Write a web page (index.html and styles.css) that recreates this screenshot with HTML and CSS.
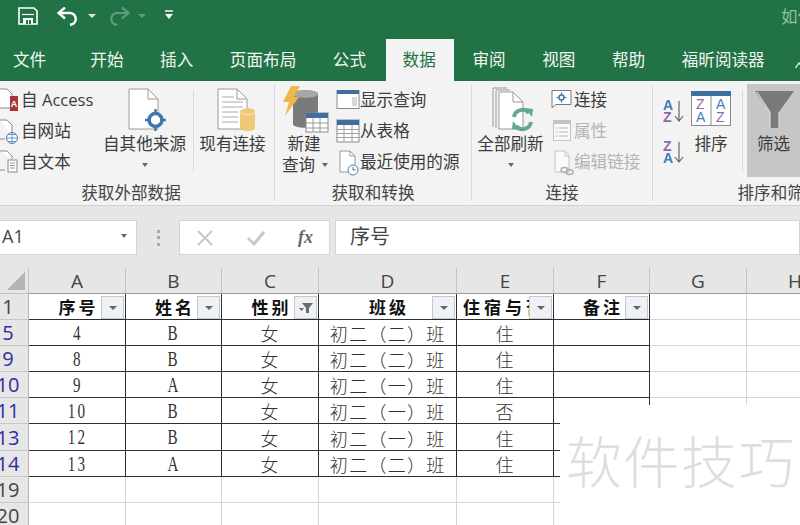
FILE: index.html
```html
<!DOCTYPE html>
<html lang="zh-CN">
<head>
<meta charset="utf-8">
<title>数据筛选</title>
<link rel="stylesheet" href="styles.css">
</head>
<body>
<div class="app">
  <header class="titlebar">
    <svg class="qa-save" width="20" height="18" viewBox="0 0 20 18"><path d="M1 1h15l3 3v13H1z" fill="none" stroke="#fff" stroke-width="1.6"/><rect x="5" y="11" width="10" height="6" fill="#fff"/><rect x="8" y="13" width="2" height="4" fill="#217346"/><rect x="11" y="13" width="2" height="4" fill="#217346"/><path d="M4 7.5h12" stroke="#fff" stroke-width="1.2"/></svg>
    <svg class="qa-undo" width="22" height="20" viewBox="0 0 22 20"><path d="M2 6h11a6 6 0 0 1 3 11l-3 1" fill="none" stroke="#fff" stroke-width="2.4"/><path d="M8 0.5 1.5 6 8 11.5" fill="none" stroke="#fff" stroke-width="2.4"/></svg>
    <span class="qa-caret"></span>
    <svg class="qa-redo" width="22" height="20" viewBox="0 0 22 20"><path d="M20 6H9a6 6 0 0 0-3 11l3 1" fill="none" stroke="#5d9e7e" stroke-width="2.2"/><path d="M14 0.5 20.5 6 14 11.5" fill="none" stroke="#5d9e7e" stroke-width="2.2"/></svg>
    <span class="qa-caret dim"></span>
    <svg class="qa-more" width="10" height="10" viewBox="0 0 10 10"><path d="M1 1h8" stroke="#fff" stroke-width="1.4"/><path d="M1 4h8L5 9z" fill="#fff"/></svg>
    <span class="doc-title">如何</span>
  </header>

  <nav class="tabs">
    <span class="tab tab-file">文件</span>
    <span class="tab">开始</span>
    <span class="tab">插入</span>
    <span class="tab">页面布局</span>
    <span class="tab">公式</span>
    <span class="tab active">数据</span>
    <span class="tab">审阅</span>
    <span class="tab">视图</span>
    <span class="tab">帮助</span>
    <span class="tab">福昕阅读器</span>
    <svg class="collapse" width="8" height="8" viewBox="0 0 8 8"><path d="M0.500 7 4 2l4 5" fill="none" stroke="#fff" stroke-width="1.200"/></svg>
  </nav>

  <section class="ribbon">
    <div class="group g1">
      <div class="group-body">
        <div class="small-col col-ext">
          <div class="small">
            <svg class="sico" width="21" height="31" viewBox="0 0 21 31"><path d="M0 4h7l5 5v14H0" fill="#fff" stroke="#8a8a8a"/><rect x="10" y="11" width="8" height="15" fill="#a4373a"/><text x="14" y="22" class="ico-a">A</text></svg>
            <span>自 Access</span>
          </div>
          <div class="small">
            <svg class="sico" width="21" height="31" viewBox="0 0 21 31"><path d="M0 4h7l5 5v11M0 23h5" fill="#fff" stroke="#8a8a8a"/><circle cx="12" cy="22" r="5.5" fill="#fff" stroke="#4a80b5"/><path d="M6.5 22h11M12 16.5v11M8 18.500h8M8 25.500h8" stroke="#4a80b5" stroke-width=".8"/></svg>
            <span>自网站</span>
          </div>
          <div class="small">
            <svg class="sico" width="21" height="31" viewBox="0 0 21 31"><path d="M0 4h7l5 5v3M0 23h5" fill="#fff" stroke="#8a8a8a"/><rect x="8" y="13" width="9" height="12" fill="#fff" stroke="#8a8a8a"/><path d="M10 16h5M10 18.500h5M10 21h5" stroke="#9a9a9a"/></svg>
            <span>自文本</span>
          </div>
        </div>
        <div class="big big-other">
          <svg width="83" height="48" viewBox="0 0 83 48"><path d="M26 4h19l10 10v30H26z" fill="#fff" stroke="#9a9a9a"/><path d="M45 4v10h10" fill="none" stroke="#9a9a9a"/><circle cx="52.500" cy="35" r="6.500" fill="#fff" stroke="#3d78ad" stroke-width="3.500"/><path d="M52.500 24v6M52.500 40v6M42 35h6M57 35h6" stroke="#3d78ad" stroke-width="2.400"/></svg>
          <span>自其他来源</span>
          <i class="caret"></i>
        </div>
        <div class="vsep sep-a"></div>
        <div class="big big-exist">
          <svg width="67" height="48" viewBox="0 0 67 48"><path d="M19 4h19l10 10v30H19z" fill="#fff" stroke="#9a9a9a"/><path d="M38 4v10h10" fill="none" stroke="#9a9a9a"/><path d="M23 12h12M23 17h21M23 22h21M23 27h16M23 32h16M23 37h16" stroke="#a8a8a8"/><path d="M41 27c0-5 15-5 15 0v16c0 4-15 4-15 0z" fill="#f0c878"/><path d="M41 27c0 3.500 15 3.500 15 0" fill="none" stroke="#fbe8bd"/></svg>
          <span>现有连接</span>
        </div>
      </div>
      <div class="group-label">获取外部数据</div>
    </div>

    <div class="group g2">
      <div class="group-body">
        <div class="big big-query">
          <svg width="48" height="48" viewBox="0 0 48 48"><path d="M11 9c0-5 25-5 25 0v30c0 5-25 5-25 0z" fill="#7a7a7a"/><path d="M11 9c0 5 25 5 25 0s-25-5-25 0z" fill="#a8a8a8"/><path d="M9 1h9l-6 11h5L3 31l4-14H1z" fill="#f0b64a"/><rect x="24" y="28" width="22" height="19" fill="#fff" stroke="#8a8a8a"/><rect x="24" y="28" width="22" height="5" fill="#3f6f9f"/><path d="M31 33v14M38 33v14M24 38h22M24 43h22" stroke="#9a9a9a"/></svg>
          <span>新建</span>
          <span class="with-caret">查询<i class="caret caret-side"></i></span>
        </div>
        <div class="small-col col-get">
          <div class="small">
            <svg class="sico2" width="25" height="31" viewBox="0 0 25 31"><rect x="1" y="5.500" width="22" height="18" fill="#fff" stroke="#8a8a8a"/><rect x="1" y="5" width="22" height="4" fill="#3f6f9f"/><path d="M16 12h5v9h-5z" fill="#d8d8d8"/></svg>
            <span>显示查询</span>
          </div>
          <div class="small">
            <svg class="sico2" width="25" height="31" viewBox="0 0 25 31"><rect x="1" y="4" width="22" height="22" fill="#fff" stroke="#8a8a8a"/><rect x="1" y="4" width="22" height="5" fill="#3f6f9f"/><path d="M8 9v17M16 9v17M1 13.500h22M1 17.500h22M1 21.500h22" stroke="#a0a0a0"/></svg>
            <span>从表格</span>
          </div>
          <div class="small">
            <svg class="sico2" width="25" height="31" viewBox="0 0 25 31"><path d="M4 4h10l5 5v16H4z" fill="#fff" stroke="#9a9a9a"/><path d="M14 4v5h5" fill="none" stroke="#9a9a9a"/><circle cx="17" cy="23" r="5" fill="#fff" stroke="#4a80b5"/><path d="M17 20v3h2.500" fill="none" stroke="#666"/></svg>
            <span>最近使用的源</span>
          </div>
        </div>
      </div>
      <div class="group-label">获取和转换</div>
    </div>

    <div class="group g3">
      <div class="group-body">
        <div class="big big-refresh">
          <svg width="67" height="48" viewBox="0 0 67 48"><path d="M16 3h14M16 3v39M19 5h14M19 5v38" fill="none" stroke="#9a9a9a"/><path d="M22 7h14l10 10v27H22z" fill="#fff" stroke="#9a9a9a"/><path d="M36 7v10h10" fill="none" stroke="#9a9a9a"/><path d="M37 32a8.500 8.500 0 0 1 15-4" fill="none" stroke="#63a793" stroke-width="4"/><path d="M48 23l8 1-1 8z" fill="#63a793"/><path d="M54 37a8.500 8.500 0 0 1-15 4" fill="none" stroke="#63a793" stroke-width="4"/><path d="M43 45l-8-1 1-8z" fill="#63a793"/></svg>
          <span>全部刷新</span>
          <i class="caret"></i>
        </div>
        <div class="small-col col-conn">
          <div class="small">
            <svg class="sico2" width="25" height="31" viewBox="0 0 25 31"><path d="M2 5.500h19v14H6l-4 3z" fill="#fff" stroke="#777"/><circle cx="11.500" cy="12.500" r="2.500" fill="#fff" stroke="#3d78ad" stroke-width="1.500"/><path d="M11.500 7.500v2.500M11.500 15v2.500M6.500 12.500H9M14 12.500h2.500" stroke="#3d78ad" stroke-width="1.200"/></svg>
            <span>连接</span>
          </div>
          <div class="small off">
            <svg class="sico2" width="25" height="31" viewBox="0 0 25 31"><rect x="3.500" y="4.500" width="17" height="20" fill="#fafafa" stroke="#c4c4c4"/><rect x="3.500" y="4.500" width="17" height="3.500" fill="#c4c4c4"/><path d="M9 12h9M9 16h9M9 20h9M5.500 12h2M5.500 16h2M5.500 20h2" stroke="#b8b8b8"/></svg>
            <span>属性</span>
          </div>
          <div class="small off">
            <svg class="sico2" width="25" height="31" viewBox="0 0 25 31"><path d="M5 4h10l4 5v16H5z" fill="#fafafa" stroke="#c4c4c4"/><path d="M15 4v5h4" fill="none" stroke="#c4c4c4"/><ellipse cx="14.500" cy="23" rx="3.500" ry="2.500" fill="none" stroke="#b0b0b0" stroke-width="1.400"/><ellipse cx="19.500" cy="25" rx="3.500" ry="2.500" fill="none" stroke="#b0b0b0" stroke-width="1.400"/></svg>
            <span>编辑链接</span>
          </div>
        </div>
      </div>
      <div class="group-label">连接</div>
    </div>

    <div class="group g4">
      <div class="group-body">
        <div class="sort-col">
          <svg width="24" height="27" viewBox="0 0 24 27"><text x="1" y="12" class="az az-a">A</text><text x="1" y="24" class="az az-z">Z</text><path d="M17 3v20M13 18l4 5 4-5" fill="none" stroke="#666" stroke-width="1.200"/></svg>
          <svg width="24" height="27" viewBox="0 0 24 27"><text x="1" y="12" class="az az-z">Z</text><text x="1" y="24" class="az az-a">A</text><path d="M17 3v20M13 18l4 5 4-5" fill="none" stroke="#666" stroke-width="1.200"/></svg>
        </div>
        <div class="big big-sort">
          <svg width="46" height="48" viewBox="0 0 46 48"><rect x="3.500" y="6.500" width="39" height="34" fill="#fff" stroke="#8a8a8a"/><rect x="3" y="6" width="40" height="5" fill="#3f6f9f"/><path d="M23 11v30" stroke="#8a8a8a"/><text x="8" y="24" class="az2 az-z">Z</text><text x="8" y="37" class="az2 az-a">A</text><text x="28" y="24" class="az2 az-a">A</text><text x="28" y="37" class="az2 az-z">Z</text></svg>
          <span>排序</span>
        </div>
        <div class="vsep sep-b"></div>
        <div class="big big-filter">
          <svg width="53" height="48" viewBox="0 0 53 48"><path d="M8 6h39L32 27v16h-9V27z" fill="#7a7a7a"/><path d="M10 7l13 20v16M32 43V27" fill="none" stroke="#e4e4e4" stroke-width="1"/></svg>
          <span>筛选</span>
        </div>
      </div>
      <div class="group-label">排序和筛选</div>
    </div>
  </section>

  <section class="formula-bar">
    <div class="name-box"><span>A1</span><i class="caret"></i></div>
    <div class="dots"><i></i><i></i><i></i></div>
    <div class="fx-box">
      <svg width="16" height="16" viewBox="0 0 16 16"><path d="M1 1l14 14M15 1 1 15" stroke="#c8c8c8" stroke-width="2"/></svg>
      <svg width="18" height="16" viewBox="0 0 18 16"><path d="M1 8l6 6L17 2" fill="none" stroke="#c8c8c8" stroke-width="3"/></svg>
      <span class="fx">fx</span>
    </div>
    <div class="formula-input">序号</div>
  </section>

  <section class="sheet">
    <div class="hd corner"><svg width="18" height="18" viewBox="0 0 18 18"><path d="M18 0v18H0z" fill="#b4b4b4"/></svg></div>
    <div class="hd">A</div><div class="hd">B</div><div class="hd">C</div><div class="hd">D</div><div class="hd">E</div><div class="hd">F</div><div class="hd">G</div><div class="hd">H</div>

    <div class="rh">1</div>
    <div class="c d th">序号<i class="fbtn"></i></div>
    <div class="c d th">姓名<i class="fbtn"></i></div>
    <div class="c d th">性别<i class="fbtn on"><svg width="14" height="10" viewBox="0 0 14 10"><path d="M3 0h11L10 5v5H7V5z" fill="#6a6a6a"/><path d="M0 5h5L2.500 8z" fill="#6a6a6a"/></svg></i></div>
    <div class="c d th">班级<i class="fbtn"></i></div>
    <div class="c d th th-cut"><span>住宿与否</span><i class="fbtn"></i></div>
    <div class="c d th">备注<i class="fbtn"></i></div>
    <div class="c"></div><div class="c"></div>

    <div class="rh blue">5</div>
    <div class="c d n"><b>4</b></div><div class="c d n"><b>B</b></div><div class="c d">女</div><div class="c d">初二（二）班</div><div class="c d">住</div><div class="c d"></div><div class="c"></div><div class="c"></div>

    <div class="rh blue">9</div>
    <div class="c d n"><b>8</b></div><div class="c d n"><b>B</b></div><div class="c d">女</div><div class="c d">初二（二）班</div><div class="c d">住</div><div class="c d"></div><div class="c"></div><div class="c"></div>

    <div class="rh blue">10</div>
    <div class="c d n"><b>9</b></div><div class="c d n"><b>A</b></div><div class="c d">女</div><div class="c d">初二（一）班</div><div class="c d">住</div><div class="c d"></div><div class="c"></div><div class="c"></div>

    <div class="rh blue">11</div>
    <div class="c d n"><b>10</b></div><div class="c d n"><b>B</b></div><div class="c d">女</div><div class="c d">初二（一）班</div><div class="c d">否</div><div class="c d"></div><div class="c"></div><div class="c"></div>

    <div class="rh blue">13</div>
    <div class="c d n"><b>12</b></div><div class="c d n"><b>B</b></div><div class="c d">女</div><div class="c d">初二（一）班</div><div class="c d">住</div><div class="c d"></div><div class="c"></div><div class="c"></div>

    <div class="rh blue">14</div>
    <div class="c d n"><b>13</b></div><div class="c d n"><b>A</b></div><div class="c d">女</div><div class="c d">初二（二）班</div><div class="c d">住</div><div class="c d"></div><div class="c"></div><div class="c"></div>

    <div class="rh">19</div>
    <div class="c"></div><div class="c"></div><div class="c"></div><div class="c"></div><div class="c"></div><div class="c"></div><div class="c"></div><div class="c"></div>

    <div class="rh">20</div>
    <div class="c"></div><div class="c"></div><div class="c"></div><div class="c"></div><div class="c"></div><div class="c"></div><div class="c"></div><div class="c"></div>

    <div class="watermark">软件技巧</div>
  </section>
</div>
</body>
</html>
```
FILE: styles.css
```css
* { box-sizing: border-box; }
html, body { margin: 0; padding: 0; }
body {
  width: 800px;
  height: 525px;
  overflow: hidden;
  background: #fff;
  font-family: "Noto Sans CJK SC", "Noto Sans", sans-serif;
}
.app { width: 800px; height: 525px; overflow: hidden; display: flex; flex-direction: column; }

/* title bar */
.titlebar {
  height: 39px;
  flex: none;
  background: #217346;
  display: flex;
  align-items: flex-start;
  padding-top: 6px;
  color: #fff;
}
.titlebar > * { flex: none; }
.qa-save { margin-left: 18px; margin-top: 1px; }
.qa-undo { margin-left: 19px; margin-top: 1px; }
.qa-caret {
  width: 0; height: 0;
  border-left: 4px solid transparent;
  border-right: 4px solid transparent;
  border-top: 4px solid #d9e8df;
  margin: 8px 0 0 9px;
}
.qa-caret.dim { border-top-color: #5d9e7e; margin-left: 8px; }
.qa-redo { margin-left: 12px; margin-top: 1px; }
.qa-more { margin-left: 18px; margin-top: 4px; }
.doc-title {
  margin-left: 607px;
  font-size: 16.500px;
  line-height: 20px;
  color: #8fc0a5;
  white-space: nowrap;
}

/* tabs */
.tabs {
  position: relative;
  height: 42px;
  flex: none;
  background: #217346;
  display: flex;
  color: #f1f6f3;
  font-size: 16.600px;
  line-height: 40px;
}
.tab { padding: 0 18.300px; white-space: nowrap; }
.tab-file { padding: 0 25px 0 13px; width: 72px; }
.tab.active { background: #f3f3f3; color: #217346; margin-left: 2px; padding-left: 16.300px; }
.collapse { position: absolute; left: 795px; top: 22px; }

/* ribbon */
.ribbon {
  height: 125px;
  flex: none;
  display: flex;
  background: #f3f3f3;
  border-bottom: 1px solid #d2d2d2;
  padding-top: 4px;
  color: #3c3c3c;
  font-size: 16.600px;
  overflow: hidden;
}
.group { flex: none; display: flex; flex-direction: column; border-right: 1px solid #d8d8d8; margin-bottom: 4px; }
.g1 { width: 275px; }
.g2 { width: 197px; padding-left: 7px; }
.g3 { width: 181px; padding-left: 5px; }
.g4 { width: 252px; padding-left: 9px; border-right: 0; }
.group-body { height: 96px; display: flex; flex: none; }
.group-label { text-align: center; line-height: 21px; white-space: nowrap; color: #444; margin-top: 1px; }
.g1 .group-label { padding-right: 12px; }
.g2 .group-label { margin-left: -7px; }
.g3 .group-label { margin-left: -5px; }
.g4 .group-label { margin-left: -9px; }

.small-col { display: flex; flex-direction: column; }
.col-ext { width: 103px; }
.col-get { margin-left: 10px; }
.col-conn { margin-left: 6px; }
.small {
  height: 31px;
  display: flex;
  align-items: center;
  white-space: nowrap;
  line-height: 21px;
  font-family: "Open Sans", "Noto Sans CJK SC", sans-serif;
}
.small > span { display: block; margin-top: -2px; }
.sico { flex: none; }
.sico2 { flex: none; margin-right: -1px; }
.small.off { color: #b4b4b4; }
.ico-a { font: bold 9px "Liberation Sans", sans-serif; fill: #fff; text-anchor: middle; }

.big { display: flex; flex-direction: column; align-items: center; line-height: 21px; white-space: nowrap; flex: none; }
.big > svg { flex: none; display: block; }
.big-other { width: 83px; }
.big-exist { width: 67px; margin-left: 5px; }
.big-query { width: 44px; }
.big-query > svg { align-self: flex-start; }
.big-refresh { width: 67px; }
.big-sort { width: 46px; margin-left: -2px; }
.big-filter { width: 53px; height: 93px; margin-left: 4px; background: #c6c6c6; margin-top: -1px; padding-top: 1px; }
.vsep { flex: none; width: 1px; height: 82px; background: #dcdcdc; margin-top: 5px; }
.sep-a { margin-left: 7px; }
.sep-b { margin-left: 8px; }
.with-caret { display: flex; align-items: center; align-self: flex-start; }

.caret {
  display: block;
  width: 0; height: 0;
  border-left: 3.500px solid transparent;
  border-right: 3.500px solid transparent;
  border-top: 4px solid #666;
}
.big > .caret { margin-top: 9px; }
.caret-side { margin-left: 7px; }

.sort-col { width: 24px; display: flex; flex-direction: column; gap: 14px; padding-top: 13px; margin-right: 4px; flex: none; }
.sort-col svg { display: block; }
.az { font: bold 14px "Liberation Sans", sans-serif; }
.az2 { font: 14px "Liberation Sans", sans-serif; }
.az-a { fill: #3f7fb5; }
.az-z { fill: #9068a8; }

/* formula bar */
.formula-bar {
  height: 62px;
  flex: none;
  background: #e6e6e6;
  padding-top: 14px;
  display: flex;
  align-items: flex-start;
}
.name-box {
  width: 137px;
  height: 35px;
  background: #fff;
  border: 1px solid #d4d4d4;
  border-left: 0;
  display: flex;
  align-items: center;
  justify-content: space-between;
  padding: 0 9px 3px 2px;
  font: 18px "Open Sans", sans-serif;
  color: #444;
}
.dots { width: 42px; height: 35px; display: flex; flex-direction: column; align-items: center; justify-content: center; gap: 3.500px; }
.dots i { display: block; width: 3px; height: 3px; background: #a8a8a8; }
.fx-box {
  width: 151px;
  height: 35px;
  background: #fff;
  border: 1px solid #d4d4d4;
  display: flex;
  align-items: center;
  padding: 0 16px 0 17px;
  justify-content: space-between;
}
.fx { font: italic bold 18px "Liberation Serif", serif; color: #666; }
.formula-input {
  flex: 1;
  height: 35px;
  margin-left: 5px;
  background: #fff;
  border: 1px solid #d4d4d4;
  padding-left: 14px;
  font-size: 20px;
  line-height: 30px;
  color: #444;
}

/* sheet */
.sheet {
  position: relative;
  flex: none;
  width: 844px;
  display: grid;
  grid-template-columns: 29px 97px 96px 97px 138px 97px 96px 97px 97px;
  grid-template-rows: 26px 26px 26px 26px 26px 26px 27px 26px 26px 26px;
  background: #fff;
}
.hd {
  background: #e6e6e6;
  border-right: 1px solid #c4c4c4;
  border-bottom: 1px solid #9c9c9c;
  display: flex;
  align-items: center;
  justify-content: center;
  font: 19px "Open Sans", sans-serif;
  color: #444;
}
.corner { justify-content: flex-start; padding-left: 7px; border-bottom-color: #c4c4c4; }
.rh {
  background: #e6e6e6;
  border-right: 1px solid #b4b4b4;
  border-bottom: 1px solid #c8c8c8;
  display: flex;
  align-items: center;
  justify-content: center;
  padding-right: 12px;
  font: 20px "Open Sans", sans-serif;
  color: #444;
  white-space: nowrap;
}
.rh.blue { color: #2e2e9e; }
.c {
  position: relative;
  border-right: 1px solid #d6d6d6;
  border-bottom: 1px solid #d6d6d6;
  display: flex;
  align-items: center;
  justify-content: center;
  padding: 1px 0 0 0.500px;
  font-size: 18px;
  font-weight: 300;
  letter-spacing: 1.300px;
  color: #333;
  white-space: nowrap;
  overflow: hidden;
}
.c.d { border-right-color: #2e2e2e; border-bottom-color: #2e2e2e; }
.c.n b {
  display: inline-block;
  font: 21px "Liberation Serif", serif;
  letter-spacing: 3px;
  transform: scaleX(.72);
}
.c.th { font-size: 17px; font-weight: 700; letter-spacing: 3px; color: #111; padding: 0 0 0 3px; }
.th-cut.th { justify-content: flex-start; padding-left: 6px; letter-spacing: 4px; }
.th-cut span { display: block; }
.fbtn {
  position: absolute;
  top: 2px;
  right: 1px;
  width: 23px;
  height: 23px;
  background: #eef1f5;
  border: 1px solid #c4c8cc;
  display: flex;
  align-items: center;
  justify-content: center;
}
.fbtn::after {
  content: "";
  width: 0; height: 0;
  border-left: 4px solid transparent;
  border-right: 4px solid transparent;
  border-top: 4px solid #666;
}
.fbtn.on::after { display: none; }

.watermark {
  position: absolute;
  left: 560px;
  top: 137px;
  width: 284px;
  height: 120px;
  background: #fff;
  padding: 19px 0 0 6px;
  font-size: 56px;
  line-height: 70px;
  letter-spacing: 1.500px;
  font-weight: 300;
  color: #dedede;
  white-space: nowrap;
}
```
